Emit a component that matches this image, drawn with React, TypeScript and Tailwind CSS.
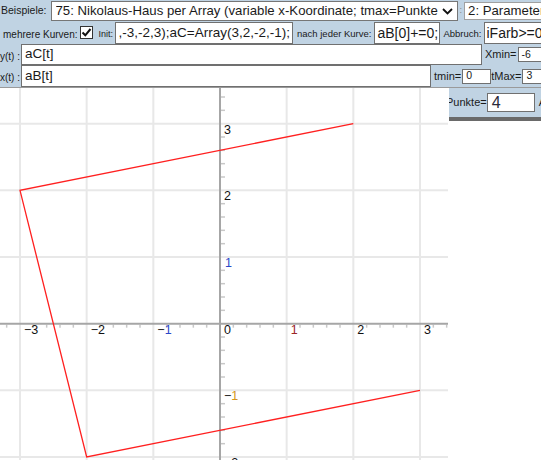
import React from "react";

const U = 66.667;
const X0 = 220;
const Y0 = 235.667;
const px = (x: number) => X0 + x * U;
const py = (y: number) => Y0 - y * U;

const curve: [number, number][] = [
  [2, 3],
  [-3, 2],
  [-2, -2],
  [3, -1],
];

function Chevron() {
  return (
    <svg width="11" height="7" viewBox="0 0 11 7" className="shrink-0">
      <path d="M1 1 L5.5 5.5 L10 1" fill="none" stroke="#111" strokeWidth="1.8" />
    </svg>
  );
}

function CheckBox() {
  return (
    <div className="w-[13px] h-[13px] bg-white border border-[#333] flex items-center justify-center shrink-0">
      <svg width="11" height="11" viewBox="0 0 11 11">
        <path d="M1.5 5.5 L4.3 8.3 L9.5 2" fill="none" stroke="#111" strokeWidth="2" />
      </svg>
    </div>
  );
}

function Graph() {
  const vLines = [-3, -2, -1, 1, 2, 3];
  const hLines = [3, 2, 1, -1, -2];
  const ticks: number[] = [];
  for (let i = -20; i <= 20; i++) if (i % 5 !== 0) ticks.push(i * 0.2);
  const pts = curve.map(([x, y]) => `${px(x)},${py(y)}`).join(" ");
  const minus = "\u2212";

  return (
    <svg width="448" height="373" className="block">
      <rect width="448" height="373" fill="#fff" />
      {vLines.map((k) => (
        <line key={"v" + k} x1={px(k)} y1={0} x2={px(k)} y2={373} stroke="#e8e8e8" strokeWidth="2" />
      ))}
      {hLines.map((k) => (
        <line key={"h" + k} x1={0} y1={py(k)} x2={448} y2={py(k)} stroke="#e8e8e8" strokeWidth="2" />
      ))}
      {ticks.map((t) => (
        <line key={"tx" + t} x1={px(t)} y1={Y0 + 1} x2={px(t)} y2={Y0 + 4} stroke="#c8c8c8" strokeWidth="1.5" />
      ))}
      {ticks.map((t) => (
        <line key={"ty" + t} x1={X0 + 1} y1={py(t)} x2={X0 + 5} y2={py(t)} stroke="#c8c8c8" strokeWidth="1.5" />
      ))}
      <line x1={0} y1={Y0} x2={448} y2={Y0} stroke="#a6a6a6" strokeWidth="2" />
      <line x1={X0} y1={0} x2={X0} y2={373} stroke="#a6a6a6" strokeWidth="2" />
      <polyline points={pts} fill="none" stroke="#ff2020" strokeWidth="1.3" />
      <g fontFamily="'Liberation Sans', Arial, sans-serif" fontSize="12.5" fill="#111">
        <text x={px(-3) + 4} y={Y0 + 10.5}>{minus}3</text>
        <text x={px(-2) + 4} y={Y0 + 10.5}>{minus}2</text>
        <text x={px(-1) + 4} y={Y0 + 10.5}>
          {minus}
          <tspan fill="#2a48c8">1</tspan>
        </text>
        <text x={px(0) + 4} y={Y0 + 10.5}>0</text>
        <text x={px(1) + 4} y={Y0 + 10.5} fill="#9a2626">1</text>
        <text x={px(2) + 4} y={Y0 + 10.5}>2</text>
        <text x={px(3) + 4} y={Y0 + 10.5}>3</text>
        <text x={X0 + 4} y={py(3) + 10}>3</text>
        <text x={X0 + 4} y={py(2) + 10}>2</text>
        <text x={X0 + 5} y={py(1) + 10} fill="#2a48c8">1</text>
        <text x={X0 + 4} y={py(-1) + 10}>
          {minus}
          <tspan fill="#d4961c">1</tspan>
        </text>
        <text x={X0 + 4} y={py(-2) + 10}>{minus}2</text>
      </g>
    </svg>
  );
}

export default function App() {
  const inputCls = "bg-white border border-[#707070] shrink-0 overflow-hidden whitespace-nowrap flex items-center";
  return (
    <div className="w-[541px] h-[460px] overflow-hidden bg-white font-['Liberation_Sans',Arial,sans-serif] text-[#1a1a1a]">
      <div className="bg-[#c0d3e3]">
        {/* row 1 */}
        <div className="flex items-center h-[22px] whitespace-nowrap overflow-hidden">
          <span className="text-[10.5px] ml-[1px] shrink-0">Beispiele:</span>
          <div className="ml-[4px] w-[407px] h-[20px] bg-white border border-[#767676] flex items-center pl-[4px] pr-[4px] shrink-0">
            <span className="flex-1 overflow-hidden text-[13.2px] leading-none">
              75: Nikolaus-Haus per Array (variable x-Koordinate; tmax=Punkte
            </span>
            <Chevron />
          </div>
          <span className="text-[9px] mx-[2px] shrink-0 text-[#888]">:</span>
          <div className="w-[90px] h-[18px] bg-white border border-[#a0a0a0] flex items-center pl-[3px] shrink-0 text-[13.2px] leading-none">
            2: Parameter
          </div>
        </div>
        {/* row 2 */}
        <div className="flex items-center h-[22px] whitespace-nowrap overflow-hidden">
          <span className="text-[10px] ml-[3px] mt-[3px] shrink-0">mehrere Kurven:</span>
          <div className="ml-[3px] mt-[-1px]">
            <CheckBox />
          </div>
          <span className="text-[9px] ml-[5px] mt-[3px] shrink-0">Init:</span>
          <div className={inputCls + " ml-[2px] w-[178px] h-[22px] text-[13.5px] justify-end pr-[2px]"}>
            ,-3,-2,3);aC=Array(3,2,-2,-1);
          </div>
          <span className="text-[9.5px] ml-[4px] mt-[3px] shrink-0">nach jeder Kurve:</span>
          <div className={inputCls + " ml-[3px] w-[66px] h-[22px] pl-[2px] text-[14px]"}>aB[0]+=0;</div>
          <span className="text-[9.5px] ml-[3px] mt-[3px] shrink-0">Abbruch:</span>
          <div className={inputCls + " ml-[2px] w-[70px] h-[22px] pl-[2px] text-[14px]"}>iFarb&gt;=0</div>
        </div>
        {/* row 3 */}
        <div className="flex items-center h-[21px] whitespace-nowrap overflow-hidden">
          <span className="text-[10px] w-[21px] shrink-0 pt-[3px]">y(t) :</span>
          <div className={inputCls + " w-[461px] h-[21px] pl-[3px] text-[13.5px]"}>aC[t]</div>
          <span className="text-[11px] ml-[3px] shrink-0">Xmin=</span>
          <div className={inputCls + " ml-[1px] w-[25px] h-[15px] pl-[3px] text-[10.5px]"}>-6</div>
          <span className="text-[11px] ml-[2px] shrink-0">X</span>
        </div>
        {/* row 4 */}
        <div className="flex items-center h-[22px] whitespace-nowrap overflow-hidden">
          <span className="text-[10px] w-[21px] shrink-0 pt-[3px]">x(t) :</span>
          <div className={inputCls + " w-[410px] h-[22px] pl-[3px] text-[13.5px]"}>aB[t]</div>
          <span className="text-[11px] ml-[3px] shrink-0">tmin=</span>
          <div className={inputCls + " ml-[1px] w-[29px] h-[15px] pl-[3px] text-[10.5px]"}>0</div>
          <span className="text-[11px] shrink-0">tMax=</span>
          <div className={inputCls + " ml-[1px] w-[40px] h-[15px] pl-[3px] text-[10.5px]"}>3</div>
        </div>
      </div>
      <div className="relative h-[373px] border-t border-[#9a9a9a]">
        <Graph />
        <div className="absolute left-[449px] top-0 w-[92px] h-[33px] bg-[#c0d3e3] border-b-[4px] border-[#6a6a6a] overflow-hidden">
          <div className="flex items-center h-[29px] ml-[-3px] whitespace-nowrap">
            <span className="text-[11px] shrink-0">Punkte=</span>
            <div className={inputCls + " w-[48px] h-[19px] pl-[4px] text-[16px] text-[#2a2a3a]"}>4</div>
            <span className="text-[11px] ml-[4px] shrink-0">A</span>
          </div>
        </div>
      </div>
    </div>
  );
}
